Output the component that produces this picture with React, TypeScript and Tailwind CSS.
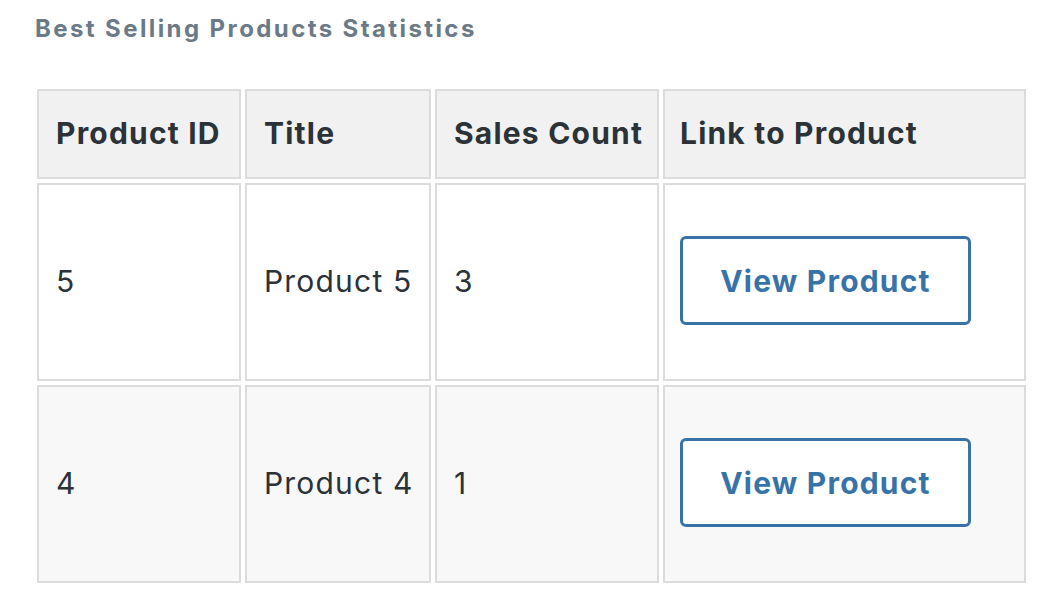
const rows = [
  { id: "5", title: "Product 5", sales: "3", bg: "bg-white" },
  { id: "4", title: "Product 4", sales: "1", bg: "bg-[#f8f8f8]" },
];

const cell = "border-2 border-[#dcdcdc] pr-0 pb-[3px] text-left align-middle whitespace-nowrap";

export default function App() {
  return (
    <div className="min-h-[606px] bg-white pl-[33px] pt-[14px] font-['Inter','Liberation_Sans',sans-serif] text-[#2b3238]">
      <h2 className="pl-[2px] text-[24px] font-bold leading-[30px] tracking-[2.4px] text-[#6b7a86]">
        Best Selling Products Statistics
      </h2>
      <table className="mt-[41px] table-fixed border-separate border-spacing-[4px] text-[30px] leading-[36px] tracking-[1.2px]">
        <colgroup>
          <col className="w-[204px]" />
          <col className="w-[186px]" />
          <col className="w-[224px]" />
          <col className="w-[363px]" />
        </colgroup>
        <thead>
          <tr className="h-[90px] bg-[#f1f1f1]">
            <th className={`${cell} pl-[17px] font-bold`}>Product ID</th>
            <th className={`${cell} pl-[17px] font-bold`}>Title</th>
            <th className={`${cell} pl-[17px] font-bold`}>Sales Count</th>
            <th className={`${cell} pl-[15px] font-bold`}>Link to Product</th>
          </tr>
        </thead>
        <tbody>
          {rows.map((r) => (
            <tr key={r.id} className={`h-[198px] ${r.bg}`}>
              <td className={`${cell} pl-[17px]`}>{r.id}</td>
              <td className={`${cell} pl-[17px]`}>{r.title}</td>
              <td className={`${cell} pl-[17px]`}>{r.sales}</td>
              <td className={`${cell} pl-[15px]`}>
                <a
                  href="#"
                  className="flex h-[89px] w-[291px] items-center justify-center rounded-[6px] border-[3px] border-[#3873a8] bg-white font-bold text-[#3873a8]"
                >
                  View Product
                </a>
              </td>
            </tr>
          ))}
        </tbody>
      </table>
    </div>
  );
}
